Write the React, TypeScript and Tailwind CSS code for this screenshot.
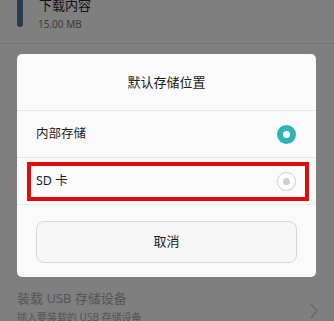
import React from "react";

const font = { fontFamily: '"Noto Sans", "Noto Sans CJK SC", sans-serif' };

export default function App() {
  return (
    <div
      className="relative w-[334px] h-[321px] overflow-hidden bg-[#7f7f7f]"
      style={font}
    >
      {/* underlying page */}
      <div className="flex flex-col">
        <div className="flex h-[43px]">
          <div className="ml-[17px] w-[6px] h-[27px] rounded-b-[3px] bg-[#2c3a4f]" />
          <div className="ml-[16px] flex flex-col -mt-[4px]">
            <span className="text-[13px] leading-[18px] text-[#111]">下载内容</span>
            <span className="text-[10px] leading-[14px] text-[#3a3a3a] mt-[3px] -ml-[1px]">15.00 MB</span>
          </div>
        </div>
        <div className="h-px bg-[#747474]" />
        <div className="h-[233px]" />
        <div className="flex items-center pl-[17px] pr-[16px] pt-[12px]">
          <div className="flex flex-col flex-1">
            <span className="text-[13px] leading-[18px] text-[#555]">装载 USB 存储设备</span>
            <span className="text-[10px] leading-[14px] text-[#555] mt-[3px]">插入要装载的 USB 存储设备</span>
          </div>
          <svg width="8" height="16" viewBox="0 0 8 16" className="mt-[8px]">
            <path d="M1 1 L7 8 L1 15" fill="none" stroke="#666" strokeWidth="1.2" />
          </svg>
        </div>
      </div>

      {/* dialog */}
      <div className="absolute left-[17px] top-[54px] w-[299px] h-[223px] bg-[#fafafa] rounded-[5px] flex flex-col">
        <div className="h-[56px] flex items-center justify-center text-[13px] text-[#1a1a1a] pt-[2px]">
          默认存储位置
        </div>
        <div className="h-px bg-[#e6e6e6]" />
        <div className="h-[46px] flex items-center justify-between pl-[19px] pr-[20px]">
          <span className="text-[12.5px] text-[#1a1a1a]">内部存储</span>
          <div className="w-[19px] h-[19px] rounded-full bg-[#2fb3b6] flex items-center justify-center">
            <div className="w-[7px] h-[7px] rounded-full bg-white" />
          </div>
        </div>
        <div className="h-px bg-[#e6e6e6]" />
        <div className="h-[46px] flex items-center justify-between pl-[19px] pr-[20px]">
          <span className="text-[12.5px] text-[#1a1a1a]">SD 卡</span>
          <div className="w-[19px] h-[19px] rounded-full border border-[#cfcfcf] bg-white flex items-center justify-center">
            <div className="w-[7px] h-[7px] rounded-full bg-[#cdcdcd]" />
          </div>
        </div>
        <div className="h-px bg-[#ececec]" />
        <div className="flex-1 px-[19px] pt-[16px]">
          <div className="h-[42px] rounded-[8px] border border-[#d6d6d6] bg-[#f7f7f7] flex items-center justify-center text-[13px] text-[#1a1a1a]">
            取消
          </div>
        </div>
      </div>

      {/* annotation box */}
      <div className="absolute left-[27px] top-[162px] w-[282px] h-[39px] border-[4px] border-[#e20a0a]" />
    </div>
  );
}
